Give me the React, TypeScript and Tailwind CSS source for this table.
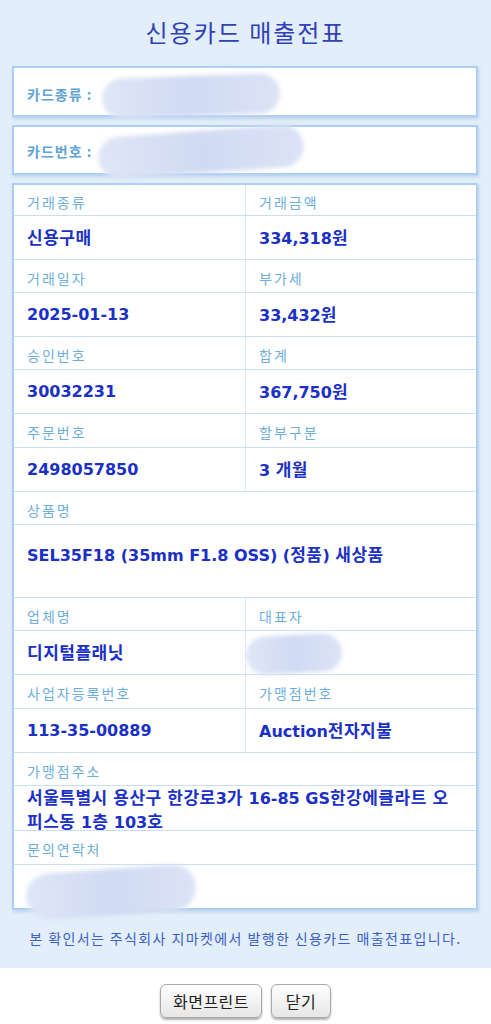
import React from "react";

const FONT = { fontFamily: '"DejaVu Sans", "Noto Sans CJK KR", sans-serif' };
const KR = { fontFamily: '"Noto Sans CJK KR", "DejaVu Sans", sans-serif' };

// Korean runs are a bit wider in the original than the latin bold face
const Mixed = ({ text }: { text: string }) => (
  <span>
    {text.split(/([가-힣]+)/).map((part, i) =>
      /[가-힣]/.test(part) ? (
        <span key={i} className="text-[17px] tracking-[0.5px]" style={KR}>
          {part}
        </span>
      ) : (
        <React.Fragment key={i}>{part}</React.Fragment>
      )
    )}
  </span>
);

const Blob = ({ className }: { className: string }) => (
  <div
    className={
      "pointer-events-none absolute rounded-full bg-gradient-to-r from-[#dfe6f6] via-[#d0daf3] to-[#dbe3f6] blur-[2px] " +
      className
    }
  />
);

const Label = ({ children, first, tall }: { children: React.ReactNode; first?: boolean; tall?: boolean }) => (
  <div
    className={
      "flex items-center pt-[3px] px-[13px] text-[14px] tracking-[2px] text-[#6eaedd] leading-none " +
      (first ? "h-[30px]" : tall ? "h-[33px]" : "h-[32px]")
    }
    style={KR}
  >
    {children}
  </div>
);

const LabelRow = ({
  left,
  right,
  first,
  tall,
}: {
  left: string;
  right?: string;
  first?: boolean;
  tall?: boolean;
}) => (
  <div className="flex border-b border-[#c8dff6]">
    <div className={right !== undefined ? "w-[232px] border-r border-[#dde9f7]" : "flex-1"}>
      <Label first={first} tall={tall}>
        {left}
      </Label>
    </div>
    {right !== undefined && (
      <div className="flex-1">
        <Label first={first} tall={tall}>
          {right}
        </Label>
      </div>
    )}
  </div>
);

const Value = ({ children }: { children: React.ReactNode }) => (
  <div className="flex h-full items-center px-[13px] text-[16px] font-bold text-[#1a30c6] leading-none" style={FONT}>
    {children}
  </div>
);

const ValueRow = ({
  left,
  right,
  blobRight,
}: {
  left: string;
  right?: string;
  blobRight?: boolean;
}) => (
  <div className="relative flex h-[44px] border-b border-[#c8dff6]">
    <div className="w-[232px] border-r border-[#dde9f7]">
      <Value>
        <Mixed text={left} />
      </Value>
    </div>
    <div className="flex-1">
      <Value>{right ? <Mixed text={right} /> : null}</Value>
    </div>
    {blobRight && <Blob className="left-[232px] top-[4px] h-[38px] w-[96px] rotate-[-3deg]" />}
  </div>
);

export default function App() {
  return (
    <div className="w-[491px] min-h-[1024px] bg-white" style={FONT}>
      <div className="bg-[#e2eefa]">
        <h1
          className="flex h-[66px] items-center justify-center pb-[2px] text-[24px] font-normal tracking-[2px] text-[#3142b6]"
          style={KR}
        >
          신용카드 매출전표
        </h1>

        <div className="relative ml-[12px] flex h-[51px] w-[466px] items-center border-2 border-[#acd0f5] bg-white pt-[6px] pl-[13px] shadow-[1px_2px_3px_rgba(120,160,205,0.35)]">
          <span className="text-[14px] font-bold tracking-[1px] text-[#5fa3d8]" style={KR}>
            카드종류 :
          </span>
          <Blob className="left-[88px] top-[8px] h-[40px] w-[178px] rotate-[-2deg]" />
        </div>

        <div className="relative mt-[8px] ml-[12px] flex h-[50px] w-[466px] items-center border-2 border-[#acd0f5] bg-white pt-[3px] pl-[13px] shadow-[1px_2px_3px_rgba(120,160,205,0.35)]">
          <span className="text-[14px] font-bold tracking-[1px] text-[#5fa3d8]" style={KR}>
            카드번호 :
          </span>
          <Blob className="left-[84px] top-[4px] h-[42px] w-[206px] rotate-[-4deg]" />
        </div>

        <div className="relative mt-[8px] ml-[12px] w-[466px] border-2 border-[#acd0f5] bg-white shadow-[1px_2px_3px_rgba(120,160,205,0.35)]">
          <LabelRow first left="거래종류" right="거래금액" />
          <ValueRow left="신용구매" right="334,318원" />
          <LabelRow left="거래일자" right="부가세" />
          <ValueRow left="2025-01-13" right="33,432원" />
          <LabelRow left="승인번호" right="합계" />
          <ValueRow left="30032231" right="367,750원" />
          <LabelRow tall left="주문번호" right="할부구분" />
          <ValueRow left="2498057850" right="3 개월" />
          <LabelRow left="상품명" />
          <div className="h-[73px] border-b border-[#c8dff6] px-[13px] pt-[18px] text-[16px] font-bold leading-[22px] text-[#1a30c6]">
            <Mixed text="SEL35F18 (35mm F1.8 OSS) (정품) 새상품" />
          </div>
          <LabelRow left="업체명" right="대표자" />
          <ValueRow left="디지털플래닛" blobRight />
          <LabelRow tall left="사업자등록번호" right="가맹점번호" />
          <ValueRow left="113-35-00889" right="Auction전자지불" />
          <LabelRow left="가맹점주소" />
          <div className="h-[45px] border-b border-[#c8dff6] pl-[13px] text-[16px] font-bold leading-[22px] text-[#1a30c6] whitespace-nowrap">
            <Mixed text="서울특별시 용산구 한강로3가 16-85 GS한강에클라트 오" />
            <br />
            <Mixed text="피스동 1층 103호" />
          </div>
          <LabelRow tall left="문의연락처" />
          <div className="relative h-[43px]">
            <Blob className="left-[12px] top-[4px] h-[46px] w-[170px] rotate-[-4deg]" />
          </div>
        </div>

        <div
          className="flex h-[58px] items-center justify-center pb-[1px] text-[14px] tracking-[1.4px] text-[#3d60c8]"
          style={KR}
        >
          본 확인서는 주식회사 지마켓에서 발행한 신용카드 매출전표입니다.
        </div>
      </div>

      <div className="flex justify-center gap-[9px] pt-[16px]" style={KR}>
        <button className="flex h-[34px] w-[102px] items-center justify-center rounded-[6px] border border-[#a8a8a8] bg-gradient-to-b from-white to-[#e6e6e6] text-[16px] tracking-[0.5px] text-[#222] shadow-[0_2px_2px_rgba(0,0,0,0.3)]">
          화면프린트
        </button>
        <button className="flex h-[34px] w-[60px] items-center justify-center rounded-[6px] border border-[#a8a8a8] bg-gradient-to-b from-white to-[#e6e6e6] text-[16px] tracking-[0.5px] text-[#222] shadow-[0_2px_2px_rgba(0,0,0,0.3)]">
          닫기
        </button>
      </div>
    </div>
  );
}
